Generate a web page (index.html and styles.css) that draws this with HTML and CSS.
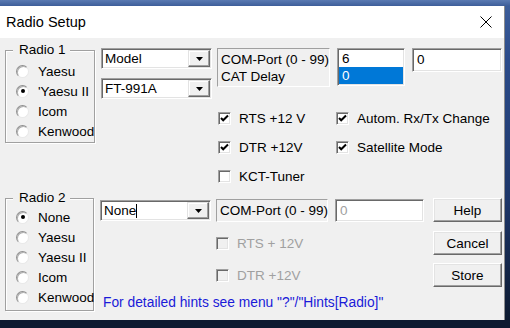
FILE: index.html
```html
<!DOCTYPE html>
<html>
<head>
<meta charset="utf-8">
<link rel="stylesheet" href="styles.css">
</head>
<body>
<div class="window">
  <div class="titlebar">
    <span class="title">Radio Setup</span>
    <svg class="close" width="12" height="12" viewBox="0 0 12 12"><path d="M0.5 0.5 L11.5 11.5 M11.5 0.5 L0.5 11.5" stroke="#000" stroke-width="1" fill="none"/></svg>
  </div>
  <div class="client">
    <div class="sec sec1">
      <div class="group g1">
        <span class="legend">Radio 1</span>
        <div class="radio"><span class="rb"></span>Yaesu</div>
        <div class="radio"><span class="rb on"></span>'Yaesu II</div>
        <div class="radio"><span class="rb"></span>Icom</div>
        <div class="radio"><span class="rb"></span>Kenwood</div>
      </div>
      <div class="combos">
        <div class="combo"><span class="ctext">Model</span><span class="dbtn"><svg width="7" height="4" viewBox="0 0 7 4"><path d="M0 0 H7 L3.5 4 Z" fill="#000"/></svg></span></div>
        <div class="combo"><span class="ctext">FT-991A</span><span class="dbtn"><svg width="7" height="4" viewBox="0 0 7 4"><path d="M0 0 H7 L3.5 4 Z" fill="#000"/></svg></span></div>
      </div>
      <div class="main1">
        <div class="row1">
          <div class="static static1">COM-Port (0 - 99)<br>CAT Delay</div>
          <div class="listbox">
            <div class="item">6</div>
            <div class="item sel">0</div>
          </div>
          <div class="edit edit1">0</div>
        </div>
        <div class="checks1">
          <div class="chk"><span class="cb"><svg width="11" height="11" viewBox="0 0 11 11"><path d="M2 5 L4.2 7.3 L9 2.5" stroke="#000" stroke-width="2" fill="none"/></svg></span>RTS +12 V</div>
          <div class="chk"><span class="cb"><svg width="11" height="11" viewBox="0 0 11 11"><path d="M2 5 L4.2 7.3 L9 2.5" stroke="#000" stroke-width="2" fill="none"/></svg></span>Autom. Rx/Tx Change</div>
          <div class="chk"><span class="cb"><svg width="11" height="11" viewBox="0 0 11 11"><path d="M2 5 L4.2 7.3 L9 2.5" stroke="#000" stroke-width="2" fill="none"/></svg></span>DTR +12V</div>
          <div class="chk"><span class="cb"><svg width="11" height="11" viewBox="0 0 11 11"><path d="M2 5 L4.2 7.3 L9 2.5" stroke="#000" stroke-width="2" fill="none"/></svg></span>Satellite Mode</div>
          <div class="chk"><span class="cb"></span>KCT-Tuner</div>
        </div>
      </div>
    </div>
    <div class="sec sec2">
      <div class="group g2">
        <span class="legend">Radio 2</span>
        <div class="radio"><span class="rb on"></span>None</div>
        <div class="radio"><span class="rb"></span>Yaesu</div>
        <div class="radio"><span class="rb"></span>Yaesu II</div>
        <div class="radio"><span class="rb"></span>Icom</div>
        <div class="radio"><span class="rb"></span>Kenwood</div>
      </div>
      <div class="right2">
        <div class="rowA">
          <div class="combo combo2"><span class="ctext">None<span class="caret"></span></span><span class="dbtn"><svg width="7" height="4" viewBox="0 0 7 4"><path d="M0 0 H7 L3.5 4 Z" fill="#000"/></svg></span></div>
          <div class="static static2">COM-Port (0 - 99)</div>
          <div class="edit edit2">0</div>
          <div class="btn btn-help">Help</div>
        </div>
        <div class="rowB">
          <div class="checks2">
            <div class="chk dis c-rts"><span class="cb"></span>RTS + 12V</div>
            <div class="chk dis c-dtr"><span class="cb"></span>DTR +12V</div>
          </div>
          <div class="btns">
            <div class="btn btn-cancel">Cancel</div>
            <div class="btn btn-store">Store</div>
          </div>
        </div>
        <div class="hint">For detailed hints see menu "?"/"Hints[Radio]"</div>
      </div>
    </div>
  </div>
</div>
</body>
</html>
```
FILE: styles.css
```css
* { box-sizing: border-box; }
html, body { margin: 0; padding: 0; }
body {
  width: 510px;
  height: 328px;
  overflow: hidden;
  background: linear-gradient(180deg, #5a7ab2 0px, #3d5e9a 6px, #2b4b8a 60px, #1d3669 200px, #0d1a30 320px);
  font-family: "Liberation Sans", Arial, sans-serif;
  font-size: 13.5px;
  color: #000;
}
.window {
  margin-top: 6px;
  width: 505px;
  height: 314px;
  background: #f0f0f0;
  border-right: 1px solid #8c8c8c;
  display: flex;
  flex-direction: column;
}
.titlebar {
  height: 32px;
  flex: none;
  background: #fff;
  display: flex;
  align-items: center;
  padding: 0 12px 0 6px;
}
.title { flex: 1; font-size: 14.5px; color: #000; }
.close { display: block; }
.client { flex: 1; padding-left: 5px; }
.sec { display: flex; align-items: flex-start; }
.sec1 { height: 152px; }
.sec2 { height: 130px; }

.group {
  position: relative;
  width: 90px;
  border: 1px solid #a0a0a0;
  box-shadow: 1px 1px 0 #fff, inset 1px 1px 0 #fff;
  padding-left: 10px;
}
.g1 { margin-top: 12px; height: 93px; padding-top: 10px; }
.g2 { margin-top: 8px; height: 113px; padding-top: 8px; width: 89px; }
.legend {
  position: absolute;
  left: 7px;
  top: -9px;
  padding: 0 4px 0 6px;
  background: #f0f0f0;
  line-height: 16px;
}
.radio {
  display: flex;
  align-items: center;
  height: 20px;
  white-space: nowrap;
}
.rb {
  position: relative;
  flex: none;
  width: 13px;
  height: 13px;
  border-radius: 50%;
  background: #fff;
  border: 1px solid;
  border-color: #909090 #e8e8e8 #e8e8e8 #909090;
  box-shadow: inset 1px 1px 0 #b0b0b0;
  margin-right: 9px;
}
.rb.on::after {
  content: "";
  position: absolute;
  left: 3.5px;
  top: 3.5px;
  width: 4px;
  height: 4px;
  border-radius: 50%;
  background: #000;
}

.combos {
  margin-left: 6px;
  margin-top: 10px;
  width: 111px;
  display: flex;
  flex-direction: column;
  gap: 9px;
}
.combo {
  width: 111px;
  height: 21px;
  background: #fff;
  border: 1px solid;
  border-color: #a0a0a0 #fff #fff #a0a0a0;
  box-shadow: inset 1px 1px 0 #696969, inset -1px -1px 0 #e3e3e3;
  padding: 1px;
  display: flex;
  align-items: stretch;
}
.ctext {
  flex: 1;
  padding-left: 2px;
  display: flex;
  align-items: center;
  white-space: nowrap;
}
.caret {
  display: inline-block;
  width: 1px;
  height: 14px;
  background: #000;
}
.dbtn {
  width: 22px;
  flex: none;
  background: #f0f0f0;
  border: 1px solid;
  border-color: #e3e3e3 #696969 #696969 #e3e3e3;
  box-shadow: inset -1px -1px 0 #a0a0a0, inset 1px 1px 0 #fff;
  display: flex;
  align-items: center;
  justify-content: center;
}
.dbtn svg { display: block; }

.main1 {
  margin-left: 5px;
  margin-top: 10px;
  display: flex;
  flex-direction: column;
}
.row1 { display: flex; align-items: flex-start; }
.static {
  border: 1px solid;
  border-color: #a0a0a0 #fff #fff #a0a0a0;
  padding-left: 3px;
  white-space: nowrap;
}
.static1 { width: 113px; height: 39px; padding-top: 3px; line-height: 16.5px; }
.listbox {
  margin-left: 7px;
  width: 68px;
  height: 38px;
  background: #fff;
  border: 1px solid;
  border-color: #a0a0a0 #fff #fff #a0a0a0;
  box-shadow: inset 1px 1px 0 #696969, inset -1px -1px 0 #e3e3e3;
  padding: 1px;
}
.item { height: 17px; line-height: 17px; padding-left: 3px; }
.item.sel { background: #0078d7; color: #fff; }
.edit {
  background: #fff;
  border: 1px solid;
  border-color: #a0a0a0 #fff #fff #a0a0a0;
  box-shadow: inset 1px 1px 0 #696969, inset -1px -1px 0 #e3e3e3;
  padding-left: 4px;
}
.edit1 { margin-left: 7px; width: 90px; height: 24px; line-height: 22px; }

.checks1 {
  display: grid;
  grid-template-columns: 118px auto;
  row-gap: 9px;
  margin-top: 21px;
  margin-left: 1px;
}
.chk {
  display: flex;
  align-items: center;
  height: 20px;
  white-space: nowrap;
}
.cb {
  flex: none;
  width: 13px;
  height: 13px;
  background: #fff;
  border: 1px solid;
  border-color: #a0a0a0 #fff #fff #a0a0a0;
  box-shadow: inset 1px 1px 0 #696969, inset -1px -1px 0 #e3e3e3;
  margin-right: 8px;
  display: flex;
  align-items: center;
  justify-content: center;
}
.cb svg { display: block; }
.chk.dis { color: #a0a0a0; }
.chk.dis .cb { background: #f0f0f0; }

.right2 {
  margin-left: 6px;
  width: 402px;
  display: flex;
  flex-direction: column;
}
.rowA { display: flex; align-items: flex-start; }
.combo2 { margin-top: 10px; }
.static2 { margin-left: 5px; margin-top: 9px; width: 112px; height: 23px; line-height: 21px; }
.edit2 { margin-left: 7px; margin-top: 9px; width: 89px; height: 23px; line-height: 21px; color: #a0a0a0; }
.btn {
  width: 69px;
  height: 24px;
  background: #f0f0f0;
  border: 1px solid;
  border-color: #fff #696969 #696969 #fff;
  box-shadow: inset -1px -1px 0 #a0a0a0, inset 1px 1px 0 #e3e3e3;
  display: flex;
  align-items: center;
  justify-content: center;
}
.btn-help { margin-left: 9px; margin-top: 8px; }
.rowB { display: flex; align-items: flex-start; margin-left: 116px; }
.checks2 { flex: 1; display: flex; flex-direction: column; }
.c-rts { margin-top: 11px; }
.c-dtr { margin-top: 12px; }
.btns { display: flex; flex-direction: column; }
.btn-cancel { margin-top: 9px; }
.btn-store { margin-top: 8px; }
.hint {
  margin-top: 8px;
  margin-left: 3px;
  line-height: 16px;
  font-size: 13.8px;
  color: #1a1ad8;
  white-space: nowrap;
}
```
